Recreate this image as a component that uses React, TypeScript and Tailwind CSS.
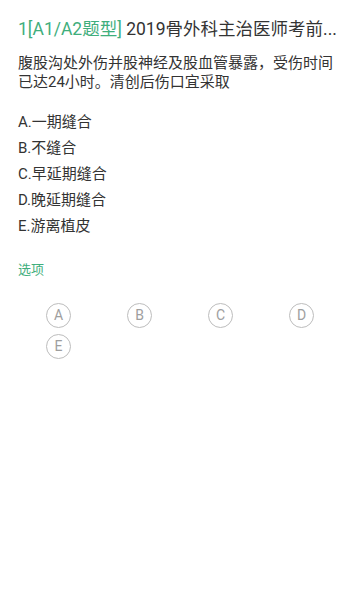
import React from "react";

const options = [
  "A.一期缝合",
  "B.不缝合",
  "C.早延期缝合",
  "D.晚延期缝合",
  "E.游离植皮",
];

const letters = ["A", "B", "C", "D", "E"];

export default function App() {
  return (
    <div
      className="w-[360px] h-[590px] bg-white px-[18px] pt-[18px]"
      style={{ fontFamily: 'Roboto, "Noto Sans CJK SC", sans-serif' }}
    >
      <div className="whitespace-nowrap text-[17.5px] leading-[22px] text-[#333]">
        <span className="text-[#3fae7c]">1[A1/A2题型]</span> 2019骨外科主治医师考前...
      </div>
      <p className="mt-[14px] text-[15px] leading-[19px] text-[#333]">
        腹股沟处外伤并股神经及股血管暴露，受伤时间已达24小时。清创后伤口宜采取
      </p>
      <div className="mt-[17px]">
        {options.map((o) => (
          <div key={o} className="text-[15px] leading-[26px] text-[#333]">
            {o}
          </div>
        ))}
      </div>
      <div className="mt-[22px] text-[13px] leading-[18px] text-[#3fae7c]">选项</div>
      <div className="mt-[24px] grid grid-cols-4 gap-y-[6px]">
        {letters.map((l) => (
          <div key={l} className="flex justify-center">
            <div className="flex h-[25px] w-[25px] items-center justify-center rounded-full border-[1.5px] border-[#bdbdbd] text-[14px] text-[#9e9e9e]">
              {l}
            </div>
          </div>
        ))}
      </div>
    </div>
  );
}
